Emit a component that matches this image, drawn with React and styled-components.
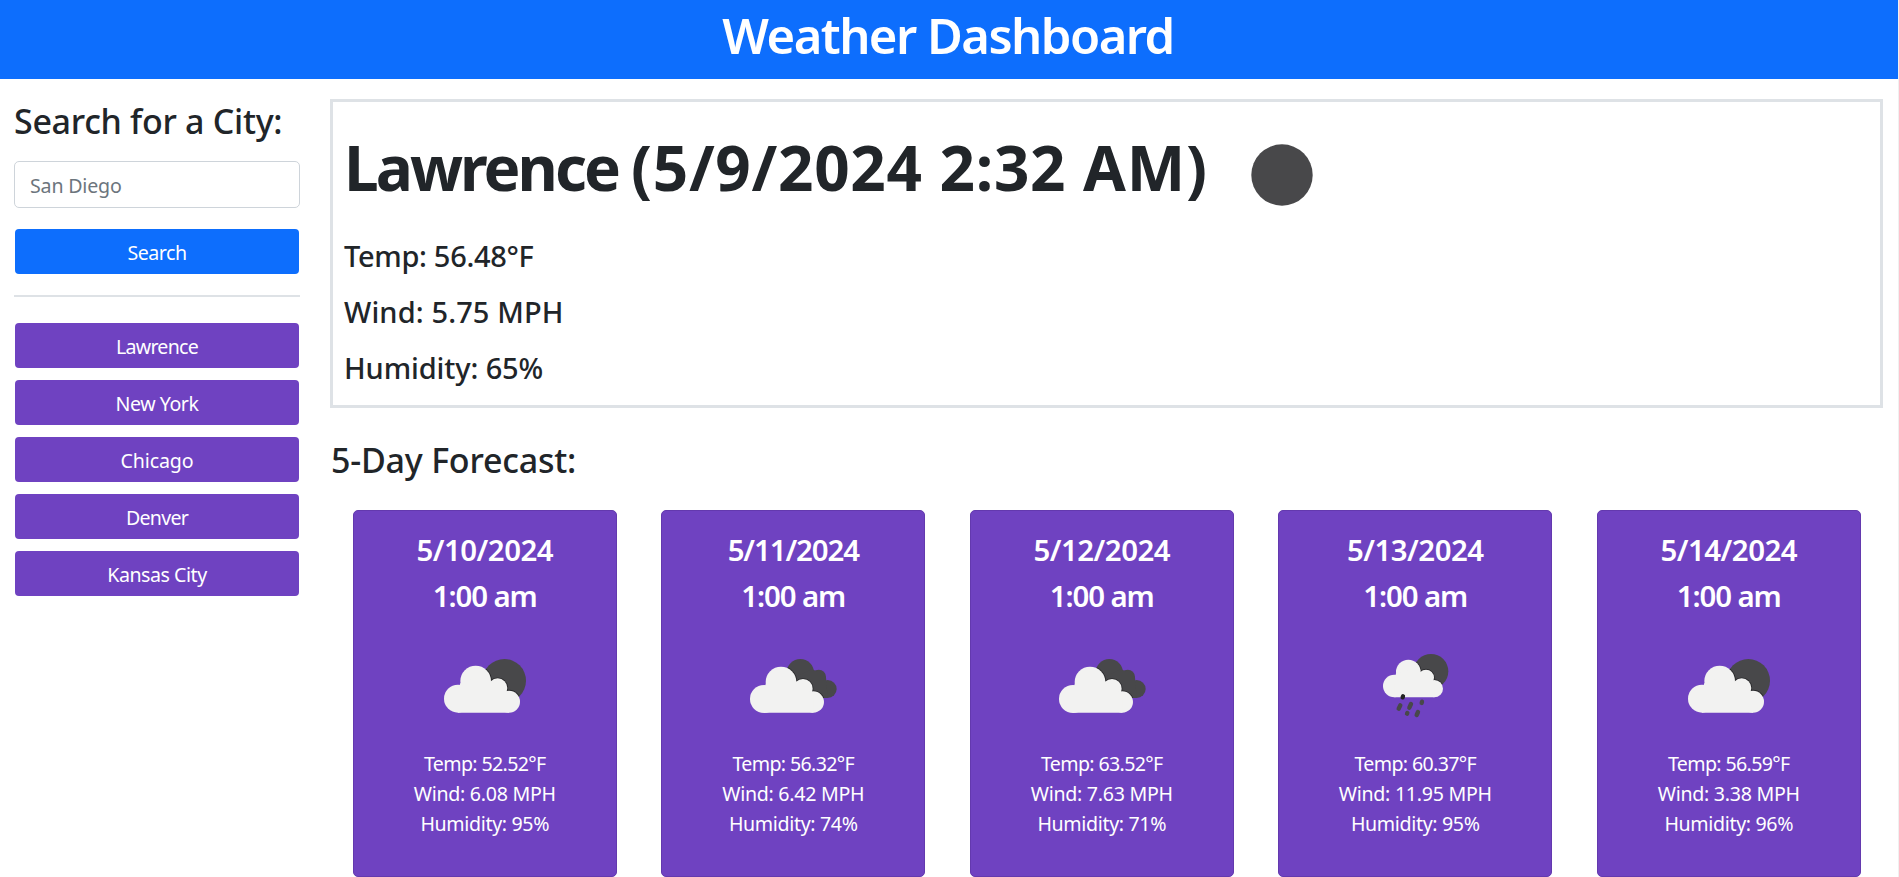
import React from "react";
import styled, { createGlobalStyle } from "styled-components";

const GlobalStyle = createGlobalStyle`
  *, *::before, *::after { box-sizing: border-box; }
  body {
    margin: 0;
    background: #fff;
    color: #212529;
    font-family: "Noto Sans", "Open Sans", sans-serif;
    font-size: 19.6px;
    overflow: hidden;
  }
  h1, h2, h3, h4, p { margin: 0; }
`;

const Page = styled.div`
  height: 877px;
  overflow: hidden;
  border-right: 1px solid #f0f0f0;
`;

const Header = styled.header`
  height: 79px;
  background: #0d6efd;
  color: #fff;
  text-align: center;
`;

const Title = styled.h1`
  padding-right: 2px;
  font-size: 49px;
  font-weight: 600;
  line-height: 71px;
  letter-spacing: -1.53px;
`;

const Main = styled.main`
  display: flex;
  align-items: flex-start;
  gap: 30px;
  padding: 20px 15px 0 14px;
`;

const Sidebar = styled.aside`
  flex: none;
  width: 286px;
`;

const SectionTitle = styled.h3`
  padding-top: 1px;
  font-size: 34px;
  font-weight: 500;
  line-height: 42px;
  letter-spacing: ${(p) => p.$spacing}px;
`;

const CityInput = styled.input`
  display: block;
  width: 100%;
  height: 47px;
  margin: 19px 0 21px;
  padding: 2px 15px 0;
  border: 1px solid #ced4da;
  border-radius: 5px;
  font: inherit;
  letter-spacing: -0.18px;
  color: #212529;
  &::placeholder { color: #6c757d; opacity: 1; }
`;

const Button = styled.button`
  display: block;
  width: 284px;
  height: 45px;
  margin: 0 1px;
  padding: 0;
  border: 0;
  border-radius: 4px;
  background: ${(p) => (p.$primary ? "#0d6efd" : "#6f42c1")};
  color: #fff;
  font: inherit;
  line-height: 47px;
  letter-spacing: ${(p) => p.$spacing}px;
  text-align: center;
`;

const Divider = styled.hr`
  height: 2px;
  margin: 21px 0 26px;
  border: 0;
  background: #dee2e6;
`;

const History = styled.div`
  display: flex;
  flex-direction: column;
  gap: 12px;
`;

const Content = styled.section`
  flex: 1;
  min-width: 0;
`;

const Current = styled.div`
  height: 309px;
  padding-left: 11px;
  border: 3px solid #dee2e6;
`;

const Heading = styled.div`
  display: flex;
  align-items: center;
  height: 126px;
  padding-top: 4px;
`;

const City = styled.h1`
  width: 287px;
  font-size: 62px;
  font-weight: 700;
  line-height: 76px;
  letter-spacing: -2.95px;
  white-space: nowrap;
`;

const Moment = styled(City)`
  width: 620px;
  letter-spacing: 0.72px;
`;

const Moon = styled.svg`
  width: 62px;
  height: 62px;
  margin-top: 16px;
`;

const Reading = styled.h4`
  font-size: 29px;
  font-weight: 500;
  line-height: 56px;
  letter-spacing: ${(p) => p.$spacing}px;
`;

const ForecastTitle = styled(SectionTitle)`
  margin: 30px 0 29px;
  padding-left: 1px;
`;

const Cards = styled.div`
  display: flex;
  justify-content: space-around;
  padding-left: 0.5px;
`;

const Card = styled.article`
  display: flex;
  flex-direction: column;
  align-items: center;
  flex: none;
  width: ${(p) => p.$width}px;
  height: 367px;
  padding-top: 16px;
  border: 1px solid #6339ae;
  border-radius: 5px;
  background: #6f42c1;
  color: #fff;
`;

const When = styled.h4`
  font-size: 29.4px;
  font-weight: 600;
  line-height: 46px;
  letter-spacing: ${(p) => p.$spacing}px;
`;

const WeatherIcon = styled.svg`
  flex: none;
  width: 110px;
  height: 90px;
  margin: 21px 0 19px;
`;

const Detail = styled.p`
  line-height: 30px;
  letter-spacing: ${(p) => p.$spacing}px;
`;

const LIGHT = "#f2f2f1";
const DARK = "#48484a";

function BrokenCloud({ id }) {
  const cloud = (
    <>
      <circle cx="84" cy="176" r="42" />
      <circle cx="137" cy="123" r="46" />
      <circle cx="203" cy="144" r="29" />
      <circle cx="237" cy="185" r="33" />
      <path d="M84 218H237V165L203 130L137 115L91 130L84 150Z" />
    </>
  );
  return (
    <WeatherIcon viewBox="0 0 330 270">
      <clipPath id={id}><circle cx="223" cy="122" r="65" /></clipPath>
      <circle cx="223" cy="122" r="65" fill={DARK} />
      <g clipPath={`url(#${id})`} fill="#29292b" stroke="#29292b" strokeWidth="5">{cloud}</g>
      <g fill={LIGHT}>{cloud}</g>
    </WeatherIcon>
  );
}

function Overcast({ id }) {
  const back = (
    <>
      <circle cx="181" cy="98" r="41" />
      <circle cx="236" cy="111" r="22" />
      <circle cx="263" cy="147" r="27" />
      <path d="M150 120L215 88L236 95L258 112L263 174H200Z" />
    </>
  );
  const cloud = (
    <>
      <circle cx="72" cy="177" r="42" />
      <circle cx="123" cy="126" r="46" />
      <circle cx="189" cy="146" r="29" />
      <circle cx="220" cy="186" r="32" />
      <path d="M72 218H220V165L189 130L123 115L78 130L72 150Z" />
    </>
  );
  return (
    <WeatherIcon viewBox="-6 0 330 270">
      <clipPath id={id}>{back}</clipPath>
      <g fill={DARK}>{back}</g>
      <g clipPath={`url(#${id})`} fill="#29292b" stroke="#29292b" strokeWidth="5">{cloud}</g>
      <g fill={LIGHT}>{cloud}</g>
    </WeatherIcon>
  );
}

function Rain({ id }) {
  const cloud = (
    <>
      <circle cx="73" cy="138" r="34" />
      <circle cx="115" cy="96" r="37" />
      <circle cx="168" cy="113" r="24" />
      <circle cx="193" cy="146" r="26" />
      <path d="M73 172H193V130L168 100L115 90L78 100L73 120Z" />
    </>
  );
  return (
    <WeatherIcon viewBox="-30 0 330 270">
      <clipPath id={id}><circle cx="183" cy="94" r="52" /></clipPath>
      <circle cx="183" cy="94" r="52" fill={DARK} />
      <g clipPath={`url(#${id})`} fill="#29292b" stroke="#29292b" strokeWidth="5">{cloud}</g>
      <g fill={LIGHT}>{cloud}</g>
      <g stroke={DARK} strokeWidth="13" strokeLinecap="round">
        <path d="M91 196L86 206" />
        <path d="M123 192L118 203" />
        <path d="M156 185L155 189" />
        <path d="M112 219L111 221" />
        <path d="M144 216L140 225" />
        <path d="M99 169L98 172" stroke="#222223" />
      </g>
    </WeatherIcon>
  );
}

const cities = [
  ["Lawrence", -0.76],
  ["New York", -0.47],
  ["Chicago", -0.14],
  ["Denver", -0.73],
  ["Kansas City", -0.46],
];

const readings = [
  ["Temp: 56.48°F", -0.32],
  ["Wind: 5.75 MPH", 0.12],
  ["Humidity: 65%", -0.12],
];

const forecast = [
  { date: "5/10/2024", temp: "52.52", wind: "6.08", humidity: 95, Icon: BrokenCloud },
  { date: "5/11/2024", temp: "56.32", wind: "6.42", humidity: 74, Icon: Overcast, spacing: -1.1 },
  { date: "5/12/2024", temp: "63.52", wind: "7.63", humidity: 71, Icon: Overcast },
  { date: "5/13/2024", temp: "60.37", wind: "11.95", humidity: 95, Icon: Rain, width: 274 },
  { date: "5/14/2024", temp: "56.59", wind: "3.38", humidity: 96, Icon: BrokenCloud },
];

export default function App() {
  return (
    <Page>
      <GlobalStyle />
      <Header>
        <Title>Weather Dashboard</Title>
      </Header>
      <Main>
        <Sidebar>
          <SectionTitle $spacing={-0.3}>Search for a City:</SectionTitle>
          <CityInput placeholder="San Diego" />
          <Button $primary $spacing={-0.48}>Search</Button>
          <Divider />
          <History>
            {cities.map(([name, spacing]) => (
              <Button key={name} $spacing={spacing}>{name}</Button>
            ))}
          </History>
        </Sidebar>
        <Content>
          <Current>
            <Heading>
              <City>Lawrence</City>
              <Moment>(5/9/2024 2:32 AM)</Moment>
              <Moon viewBox="0 0 62 62">
                <circle cx="31" cy="31" r="30.7" fill={DARK} />
              </Moon>
            </Heading>
            {readings.map(([text, spacing]) => (
              <Reading key={text} $spacing={spacing}>{text}</Reading>
            ))}
          </Current>
          <ForecastTitle $spacing={-0.22}>5-Day Forecast:</ForecastTitle>
          <Cards>
            {forecast.map(({ date, temp, wind, humidity, Icon, width = 264, spacing = -0.49 }) => (
              <Card key={date} $width={width}>
                <When $spacing={spacing}>{date}</When>
                <When $spacing={-1.1}>1:00 am</When>
                <Icon id={`shade-${date.replace(/\//g, "-")}`} />
                <Detail $spacing={-0.63}>{`Temp: ${temp}°F`}</Detail>
                <Detail $spacing={-0.27}>{`Wind: ${wind} MPH`}</Detail>
                <Detail $spacing={-0.35}>{`Humidity: ${humidity}%`}</Detail>
              </Card>
            ))}
          </Cards>
        </Content>
      </Main>
    </Page>
  );
}
